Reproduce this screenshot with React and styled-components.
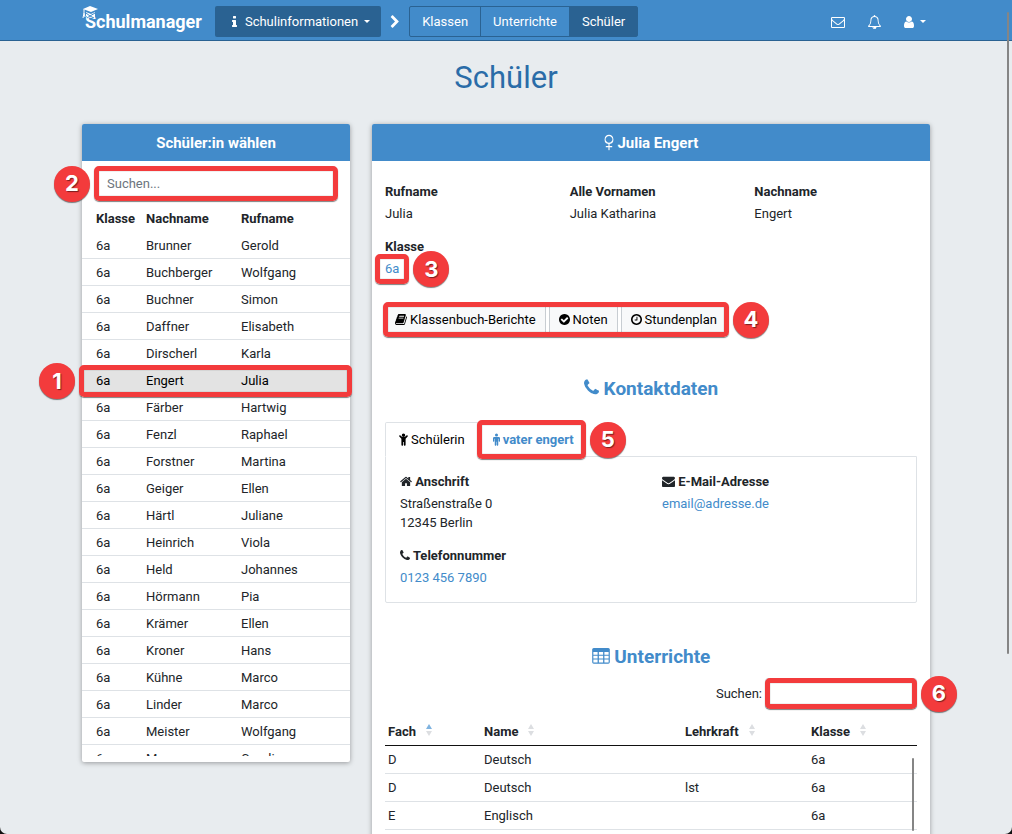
import React from 'react'
import styled, { createGlobalStyle } from "styled-components";

const Students = [
  { first: "Gerold", last: "Brunner" },
  { first: "Wolfgang", last: "Buchberger" },
  { first: "Simon", last: "Buchner" },
  { first: "Elisabeth", last: "Daffner" },
  { first: "Karla", last: "Dirscherl" },
  { first: "Julia", last: "Engert", active: true },
  { first: "Hartwig", last: "Färber" },
  { first: "Raphael", last: "Fenzl" },
  { first: "Martina", last: "Forstner" },
  { first: "Ellen", last: "Geiger" },
  { first: "Juliane", last: "Härtl" },
  { first: "Viola", last: "Heinrich" },
  { first: "Johannes", last: "Held" },
  { first: "Pia", last: "Hörmann" },
  { first: "Ellen", last: "Krämer" },
  { first: "Hans", last: "Kroner" },
  { first: "Marco", last: "Kühne" },
  { first: "Marco", last: "Linder" },
  { first: "Wolfgang", last: "Meister" },
  { first: "Caroline", last: "Manz" },
];

const Lessons = [
  { id: 0, subject: "D", name: "Deutsch", teacher: "", grade: "6a" },
  { id: 1, subject: "D", name: "Deutsch", teacher: "lst", grade: "6a" },
  { id: 2, subject: "E", name: "Englisch", teacher: "", grade: "6a" },
];

// [left edge, width, path], all on a 1792 unit high box
const Icons = {
  info: [576, 640, "M1216 1344v128q0 26-19 45t-45 19h-512q-26 0-45-19t-19-45v-128q0-26 19-45t45-19h64v-384h-64q-26 0-45-19t-19-45v-128q0-26 19-45t45-19h384q26 0 45 19t19 45v576h64q26 0 45 19t19 45zm-128-1152v192q0 26-19 45t-45 19h-256q-26 0-45-19t-19-45v-192q0-26 19-45t45-19h256q26 0 45 19t19 45z"],
  chevron: [256, 1280, "M1363 877l-742 742q-19 19-45 19t-45-19l-166-166q-19-19-19-45t19-45l531-531-531-531q-19-19-19-45t19-45l166-166q19-19 45-19t45 19l742 742q19 19 19 45t-19 45z"],
  mail: [0, 1792, "M1664 1504v-768q-32 36-69 66-268 206-426 338-51 43-83 67t-86.5 48.5-102.5 24.5h-2q-48 0-102.5-24.5t-86.5-48.5-83-67q-158-132-426-338-37-30-69-66v768q0 13 9.5 22.5t22.5 9.5h1472q13 0 22.5-9.5t9.5-22.5zm0-1051v-24.5l-.5-13-3-12.5-5.5-9-9-7.5-14-2.5h-1472q-13 0-22.5 9.5t-9.5 22.5q0 168 147 284 193 152 401 317 6 5 35 29.5t46 37.5 44.5 31.5 50.5 27.5 43 9h2q20 0 43-9t50.5-27.5 44.5-31.5 46-37.5 35-29.5q208-165 401-317 54-43 100.5-115.5t46.5-131.5zm128-37v1088q0 66-47 113t-113 47h-1472q-66 0-113-47t-47-113v-1088q0-66 47-113t113-47h1472q66 0 113 47t47 113z"],
  bell: [64, 1664, "M912 1696q0-16-16-16-59 0-101.5-42.5t-42.5-101.5q0-16-16-16t-16 16q0 73 51.5 124.5t124.5 51.5q16 0 16-16zm-666-288h1300q-266-300-266-832 0-51-24-105t-69-103-121.5-80.5-169.5-31.5-169.5 31.5-121.5 80.5-69 103-24 105q0 532-266 832zm1482 0q0 52-38 90t-90 38h-448q0 106-75 181t-181 75-181-75-75-181h-448q-52 0-90-38t-38-90q50-42 91-88t85-119.5 74.5-158.5 50-206 19.5-260q0-152 117-282.5t307-158.5q-8-19-8-39 0-40 28-68t68-28 68 28 28 68q0 20-8 39 190 28 307 158.5t117 282.5q0 139 19.5 260t50 206 74.5 158.5 85 119.5 91 88z"],
  user: [256, 1280, "M1536 1399q0 109-62.5 187t-150.5 78h-854q-88 0-150.5-78t-62.5-187q0-85 8.5-160.5t31.5-152 58.5-131 94-89 134.5-34.5q131 128 313 128t313-128q76 0 134.5 34.5t94 89 58.5 131 31.5 152 8.5 160.5zm-256-887q0 159-112.5 271.5t-271.5 112.5-271.5-112.5-112.5-271.5 112.5-271.5 271.5-112.5 271.5 112.5 112.5 271.5z"],
  book: [64, 1664, "M1703 478q40 57 18 129l-275 906q-19 64-76.5 107.5t-122.5 43.5h-923q-77 0-148.5-53.5t-99.5-131.5q-24-67-2-127 0-4 3-27t4-37q1-8-3-21.5t-3-19.5q2-11 8-21t16.5-23.5 16.5-23.5q23-38 45-91.5t30-91.5q3-10 .5-30t-.5-28q3-11 17-28t17-23q21-36 42-92t25-90q1-9-2.5-32t.5-28q4-13 22-30.5t22-22.5q19-26 42.5-84.5t27.5-96.5q1-8-3-25.5t-2-26.5q2-8 9-18t18-23 17-21q8-12 16.5-30.5t15-35 16-36 19.5-32 26.5-23.5 36-11.5 47.5 5.5l-1 3q38-9 51-9h761q74 0 114 56t18 130l-274 906q-36 119-71.5 153.5t-128.5 34.5h-869q-27 0-38 15-11 16-1 43 24 70 144 70h923q29 0 56-15.5t35-41.5l300-987q7-22 5-57 38 15 59 43zm-1064 2q-4 13 2 22.5t20 9.5h608q13 0 25.5-9.5t16.5-22.5l21-64q4-13-2-22.5t-20-9.5h-608q-13 0-25.5 9.5t-16.5 22.5zm-83 256q-4 13 2 22.5t20 9.5h608q13 0 25.5-9.5t16.5-22.5l21-64q4-13-2-22.5t-20-9.5h-608q-13 0-25.5 9.5t-16.5 22.5z"],
  check: [128, 1536, "M1412 734q0-28-18-46l-91-90q-19-19-45-19t-45 19l-408 407-226-226q-19-19-45-19t-45 19l-91 90q-18 18-18 46 0 27 18 45l362 362q19 19 45 19 27 0 46-19l543-543q18-18 18-45zm252 162q0 209-103 385.5t-279.5 279.5-385.5 103-385.5-103-279.5-279.5-103-385.5 103-385.5 279.5-279.5 385.5-103 385.5 103 279.5 279.5 103 385.5z"],
  clock: [128, 1536, "M1024 544v448q0 14-9 23t-23 9h-320q-14 0-23-9t-9-23v-64q0-14 9-23t23-9h224v-352q0-14 9-23t23-9h64q14 0 23 9t9 23zm416 352q0-148-73-273t-198-198-273-73-273 73-198 198-73 273 73 273 198 198 273 73 273-73 198-198 73-273zm224 0q0 209-103 385.5t-279.5 279.5-385.5 103-385.5-103-279.5-279.5-103-385.5 103-385.5 279.5-279.5 385.5-103 385.5 103 279.5 279.5 103 385.5z"],
  phone: [192, 1408, "M1600 1240q0 27-10 70.5t-21 68.5q-21 50-122 106-94 51-186 51-27 0-53-3.5t-57.5-12.5-47-14.5-55.5-20.5-49-18q-98-35-175-83-127-79-264-216t-216-264q-48-77-83-175-3-9-18-49t-20.5-55.5-14.5-47-12.5-57.5-3.5-53q0-92 51-186 56-101 106-122 25-11 68.5-21t70.5-10q14 0 21 3 18 6 53 76 11 19 30 54t35 63.5 31 53.5q3 4 17.5 25t21.5 35.5 7 28.5q0 20-28.5 50t-62 55-62 53-28.5 46q0 9 5 22.5t8.5 20.5 14 24 11.5 19q76 137 174 235t235 174q2 1 19 11.5t24 14 20.5 8.5 22.5 5q18 0 46-28.5t53-62 55-62 50-28.5q14 0 28.5 7t35.5 21.5 25 17.5q25 15 53.5 31t63.5 35 54 30q70 35 76 53 3 7 3 21z"],
  home: [64, 1664, "M1472 992v480q0 26-19 45t-45 19h-384v-384h-256v384h-384q-26 0-45-19t-19-45v-480q0-1 .5-3t.5-3l575-474 575 474q1 2 1 6zm223-69l-62 74q-8 9-21 11h-3q-13 0-21-7l-692-577-692 577q-12 8-24 7-13-2-21-11l-62-74q-8-10-7-23.5t11-21.5l719-599q32-26 76-26t76 26l244 204v-195q0-14 9-23t23-9h192q14 0 23 9t9 23v408l219 182q10 8 11 21.5t-7 23.5z"],
  envelope: [0, 1792, "M1792 710v794q0 66-47 113t-113 47h-1472q-66 0-113-47t-47-113v-794q44 49 101 87 362 246 497 345 57 42 92.5 65.5t94.5 48 110 24.5h2q51 0 110-24.5t94.5-48 92.5-65.5q170-123 498-345 57-39 100-87zm0-294q0 79-49 151t-122 123q-376 261-468 325-10 7-42.5 31t-54 38.5-52 32.5-57.5 27-50 9h-2q-23 0-50-9t-57.5-27-52-32.5-54-38.5-42.5-31q-91-64-262-182.5t-205-142.5q-62-42-117-115.5t-55-136.5q0-78 41.5-130t118.5-52h1472q65 0 112.5 47t47.5 113z"],
  child: [288, 1216, "M1136 300a240 240 0 1 1-480 0a240 240 0 1 1 480 0zM1468 330q34 34 34 80t-34 80l-282 292v850q0 52-36 88t-84 36-84-36-36-88v-384h-100v384q0 52-36 88t-84 36-84-36-36-88v-850l-282-292q-34-34-34-80t34-80 78-34 78 34l236 238h348l236-238q32-34 78-34t78 34z"],
  male: [384, 1024, "M1116 230a220 220 0 1 1-440 0a220 220 0 1 1 440 0zM1408 704v416q0 40-28 68t-68 28-68-28-28-68v-352h-64v912q0 46-33 79t-79 33-79-33-33-79v-464h-64v464q0 46-33 79t-79 33-79-33-33-79v-912h-64v352q0 40-28 68t-68 28-68-28-28-68v-416q0-80 56-136t136-56h640q80 0 136 56t56 136z"],
  table: [64, 1664, "M208 192h1376q60 0 102 42t42 102v1184q0 60-42 102t-102 42h-1376q-60 0-102-42t-42-102v-1184q0-60 42-102t102-42zM176 560h400v260h-400zM696 560h400v260h-400zM1216 560h400v260h-400zM176 920h400v260h-400zM696 920h400v260h-400zM1216 920h400v260h-400zM176 1280h400v270h-400zM696 1280h400v270h-400zM1216 1280h400v270h-400z"],
  venus: [352, 1088, "M896 64a500 500 0 0 1 64 992v224h256q32 0 32 32v64q0 32-32 32h-256v288q0 32-32 32h-64q-32 0-32-32v-288h-256q-32 0-32-32v-64q0-32 32-32h256v-224a500 500 0 0 1 64-992zM896 190a370 370 0 1 0 1 0z"],
};

function Icon({ name, size = 13 }) {
  const [left, width, path] = Icons[name];
  return (
    <Glyph
      viewBox={`${left} 0 ${width} 1792`}
      width={Math.round((size * width) / 1792)}
      height={size}
      aria-hidden="true"
    >
      <path fillRule="evenodd" d={path} />
    </Glyph>
  )
}

function Callout({ number, side = "right", inset = "0" }) {
  return (
    <Ring $inset={inset}>
      <Badge $side={side}>{number}</Badge>
    </Ring>
  )
}

function SortHeader({ label, sorted }) {
  return (
    <th>
      {label}
      <Sort viewBox="0 0 6 12" width="6" height="12" aria-hidden="true">
        <path d="M0 5L3 0L6 5z" fill={sorted ? "#7fb3e0" : "#dcdee1"} />
        <path d="M0 7L3 12L6 7z" fill="#dcdee1" />
      </Sort>
    </th>
  )
}

function Navbar() {
  return (
    <NavBar>
      <NavInner>
        <Brand href="#">
          <Cap viewBox="0 0 16 13" width="16" height="13" aria-hidden="true">
            <path d="M1 3L8 0L16 3L9 6z" fill="#fff" />
            <path d="M2 3v4l-1 5M2 7l1 4" stroke="#fff" fill="none" />
            <path d="M4 6l5 2l4-2v5l-4 1l-5-2z" fill="#fff" />
            <path d="M4 7l4 3l5-3M5 12l3-2l4 2" stroke="#428bca" fill="none" />
          </Cap>
          Schulmanager
        </Brand>
        <ModuleButton type="button">
          <Icon name="info" size={14} />
          Schulinformationen
          <Caret />
        </ModuleButton>
        <Icon name="chevron" size={14} />
        <PageLinks>
          <PageLink href="#">Klassen</PageLink>
          <PageLink href="#">Unterrichte</PageLink>
          <PageLink href="#" $active>Schüler</PageLink>
        </PageLinks>
        <NavActions>
          <IconButton type="button" aria-label="Nachrichten"><Icon name="mail" size={14} /></IconButton>
          <IconButton type="button" aria-label="Benachrichtigungen"><Icon name="bell" size={14} /></IconButton>
          <IconButton type="button" aria-label="Konto"><Icon name="user" size={14} /><Caret /></IconButton>
        </NavActions>
      </NavInner>
    </NavBar>
  )
}

function StudentList() {
  return (
    <Card $span={4}>
      <CardHeader>Schüler:in wählen</CardHeader>
      <SearchBox>
        <TextInput type="text" placeholder="Suchen..." aria-label="Suchen" />
        <Callout number={2} side="left" inset="-2px -3px" />
      </SearchBox>
      <ListClip>
        <StudentTable>
          <colgroup>
            <col className="grade" />
            <col className="last" />
            <col />
          </colgroup>
          <thead>
            <tr><th>Klasse</th><th>Nachname</th><th>Rufname</th></tr>
          </thead>
          <tbody>
            {Students.map((student) => (
              <StudentRow key={student.last} $active={student.active}>
                <td>6a</td>
                <td>{student.last}</td>
                <td>
                  {student.first}
                  {student.active && <Callout number={1} side="left" inset="-2px -2px -3px -3px" />}
                </td>
              </StudentRow>
            ))}
          </tbody>
        </StudentTable>
      </ListClip>
    </Card>
  )
}

function ContactData() {
  return (
    <section>
      <SectionTitle><Icon name="phone" size={19} /> Kontaktdaten</SectionTitle>
      <Tabs role="tablist">
        <Tab type="button" role="tab" aria-selected="true" $active><Icon name="child" />Schülerin</Tab>
        <Tab type="button" role="tab" aria-selected="false">
          <Icon name="male" />vater engert
          <Callout number={5} inset="-3px 1px -3px -3px" />
        </Tab>
      </Tabs>
      <TabPanel role="tabpanel">
        <Fields>
          <Field>
            <dt><Icon name="home" /> Anschrift</dt>
            <dd>Straßenstraße 0<br />12345 Berlin</dd>
          </Field>
          <Field>
            <dt><Icon name="phone" /> Telefonnummer</dt>
            <dd><a href="#">0123 456 7890</a></dd>
          </Field>
        </Fields>
        <Fields>
          <Field>
            <dt><Icon name="envelope" /> E-Mail-Adresse</dt>
            <dd><a href="#">email@adresse.de</a></dd>
          </Field>
        </Fields>
      </TabPanel>
    </section>
  )
}

function LessonList() {
  return (
    <section>
      <SectionTitle><Icon name="table" size={19} /> Unterrichte</SectionTitle>
      <FilterRow>
        <label htmlFor="lesson-search">Suchen:</label>
        <FilterBox>
          <TextInput id="lesson-search" type="search" />
          <Callout number={6} />
        </FilterBox>
      </FilterRow>
      <LessonArea>
        <LessonTable>
          <colgroup>
            <col className="subject" />
            <col className="name" />
            <col className="teacher" />
            <col />
          </colgroup>
          <thead>
            <tr>
              <SortHeader label="Fach" sorted />
              <SortHeader label="Name" />
              <SortHeader label="Lehrkraft" />
              <SortHeader label="Klasse" />
            </tr>
          </thead>
          <tbody>
            {Lessons.map((lesson) => (
              <tr key={lesson.id}>
                <td>{lesson.subject}</td>
                <td>{lesson.name}</td>
                <td>{lesson.teacher}</td>
                <td>{lesson.grade}</td>
              </tr>
            ))}
          </tbody>
        </LessonTable>
        <TableThumb />
      </LessonArea>
    </section>
  )
}

function StudentDetails() {
  return (
    <Card $span={8} $tall>
      <CardHeader><Icon name="venus" size={17} /> Julia Engert</CardHeader>
      <CardBody>
        <NameGrid>
          <Field><dt>Rufname</dt><dd>Julia</dd></Field>
          <Field><dt>Alle Vornamen</dt><dd>Julia Katharina</dd></Field>
          <Field><dt>Nachname</dt><dd>Engert</dd></Field>
          <Field>
            <dt>Klasse</dt>
            <dd>
              <Marked>
                <a href="#">6a</a>
                <Callout number={3} inset="-5px -10px -6px" />
              </Marked>
            </dd>
          </Field>
        </NameGrid>
        <Actions>
          <ActionButton type="button"><Icon name="book" />Klassenbuch-Berichte</ActionButton>
          <ActionButton type="button"><Icon name="check" />Noten</ActionButton>
          <ActionButton type="button"><Icon name="clock" />Stundenplan</ActionButton>
          <Callout number={4} inset="-2px" />
        </Actions>
        <ContactData />
        <LessonList />
      </CardBody>
    </Card>
  )
}

export default function App() {
  return (
    <Page>
      <GlobalStyle />
      <Navbar />
      <Content>
        <h1>Schüler</h1>
        <Columns>
          <StudentList />
          <StudentDetails />
        </Columns>
      </Content>
      <PageThumb />
    </Page>
  )
}

const GlobalStyle = createGlobalStyle`
  * {
    box-sizing: border-box;
  }

  body {
    margin: 0;
    background: #111;
    color: #212529;
    font-family: Roboto, "Liberation Sans", sans-serif;
    font-size: 13px;
    line-height: 19px;
  }

  button, input {
    font: inherit;
  }

  a {
    color: #428bca;
    text-decoration: none;
  }

  table {
    width: 100%;
    table-layout: fixed;
    border-collapse: separate;
    border-spacing: 0;
  }

  th {
    font-weight: 700;
    text-align: left;
    white-space: nowrap;
  }
`;

const Page = styled.div`
  position: relative;
  display: flex;
  flex-direction: column;
  height: 100vh;
  overflow: hidden;
  background: #e8ecef;
  border-radius: 0 0 7px 7px;
`;

const Glyph = styled.svg`
  flex: none;
  fill: currentColor;
  vertical-align: -2px;
`;

const Ring = styled.span`
  position: absolute;
  inset: ${(p) => p.$inset};
  border: 5px solid #f33b3c;
  border-radius: 5px;
  box-shadow: 0 1px 1px rgba(0, 0, 0, 0.5), inset 0 0 1px rgba(0, 0, 0, 0.6);
  pointer-events: none;
`;

const Badge = styled.span`
  position: absolute;
  top: 50%;
  ${(p) => (p.$side === "left" ? "right" : "left")}: calc(100% + 9px);
  display: flex;
  align-items: center;
  justify-content: center;
  width: 36px;
  height: 36px;
  margin-top: -18px;
  border-radius: 50%;
  background: #f33b3c;
  color: #fff;
  font-family: Inter, "Liberation Sans", sans-serif;
  font-size: 22px;
  font-weight: 700;
  box-shadow: 0 1px 1px rgba(0, 0, 0, 0.5);
  text-shadow: 1px 1px 1px rgba(0, 0, 0, 0.5);
`;

const NavBar = styled.nav`
  flex: none;
  background: #428bca;
  border-bottom: 1px solid #2a6292;
  color: #fff;
`;

const NavInner = styled.div`
  display: flex;
  align-items: center;
  gap: 9px;
  max-width: 848px;
  height: 40px;
  margin: 0 auto;
  padding-top: 3px;
`;

const Brand = styled.a`
  position: relative;
  margin-right: 4px;
  padding-left: 3px;
  color: #fff;
  font-size: 18px;
  font-weight: 700;
`;

const Cap = styled.svg`
  position: absolute;
  top: -6px;
  left: 0;
`;

const ModuleButton = styled.button`
  display: flex;
  align-items: center;
  height: 31px;
  padding: 0 11px 0 17px;
  border: 0;
  border-radius: 2px;
  background: #2a6292;
  color: #fff;

  svg {
    margin-right: 8px;
  }
`;

const Caret = styled.span`
  margin-left: 6px;
  border: 3px solid transparent;
  border-top-color: currentColor;
  border-bottom: 0;
`;

const PageLinks = styled.div`
  display: flex;
  border: 1px solid #2a6292;
  border-radius: 2px;
`;

const PageLink = styled.a`
  padding: 5px 12px;
  background: ${(p) => (p.$active ? "#2a6292" : "transparent")};
  color: #fff;

  & + & {
    border-left: 1px solid #2a6292;
  }
`;

const NavActions = styled.div`
  display: flex;
  gap: 23px;
  margin-left: auto;
  padding-right: 4px;
`;

const IconButton = styled.button`
  display: flex;
  align-items: center;
  padding: 0;
  border: 0;
  background: none;
  color: #fff;
`;

const Content = styled.main`
  flex: 1;
  display: flex;
  flex-direction: column;
  width: 100%;
  max-width: 848px;
  min-height: 0;
  margin: 0 auto;

  h1 {
    margin: 17px 0 26px;
    color: #2a6ca8;
    font-size: 31px;
    font-weight: 400;
    line-height: 40px;
    text-align: center;
  }
`;

const Columns = styled.div`
  display: grid;
  grid-template-columns: repeat(12, 1fr);
  column-gap: 22px;
  align-items: start;
`;

const Card = styled.section`
  grid-column: span ${(p) => p.$span};
  min-height: ${(p) => (p.$tall ? "100vh" : "0")};
  padding-bottom: 6px;
  border-radius: 2px;
  background: #fff;
  box-shadow: 0 1px 5px rgba(0, 0, 0, 0.35);
`;

const CardHeader = styled.h2`
  margin: 0;
  padding: 10px 9px 8px;
  border-radius: 2px 2px 0 0;
  background: #428bca;
  color: #fff;
  font-size: 15px;
  font-weight: 700;
  text-align: center;

  svg {
    vertical-align: -3px;
  }
`;

const CardBody = styled.div`
  padding: 21px 13px 0;
`;

const SearchBox = styled.div`
  position: relative;
  height: 31px;
  margin: 7px 15px 6px;
`;

const TextInput = styled.input`
  display: block;
  width: 100%;
  height: 100%;
  padding: 0 9px;
  border: 1px solid #ced4da;
  border-radius: 3px;
  background: #fff;
  color: #212529;

  &::placeholder {
    color: #6c757d;
  }
`;

const ListClip = styled.div`
  height: 551px;
  overflow-x: visible;
  overflow-y: clip;
`;

const StudentTable = styled.table`
  .grade {
    width: 50px;
  }

  .last {
    width: 95px;
  }

  th, td {
    height: 27px;
    padding: 0 0 0 14px;
  }

  td {
    border-bottom: 1px solid #dee2e6;
  }
`;

const StudentRow = styled.tr`
  position: relative;
  background: ${(p) => (p.$active ? "#e3e3e3" : "transparent")};
  color: ${(p) => (p.$active ? "#000" : "inherit")};
`;

const NameGrid = styled.dl`
  display: grid;
  grid-template-columns: repeat(3, 1fr);
  gap: 14px 22px;
  margin: 0;
`;

const Fields = styled.dl`
  display: flex;
  flex-direction: column;
  gap: 14px;
  margin: 0;
`;

const Field = styled.div`
  dt {
    margin-bottom: 3px;
    font-weight: 700;
  }

  dd {
    margin: 0;
  }
`;

const Marked = styled.span`
  position: relative;
  display: inline-block;
`;

const Actions = styled.div`
  position: relative;
  display: flex;
  gap: 3px;
  width: fit-content;
  margin-top: 26px;
`;

const ActionButton = styled.button`
  display: flex;
  align-items: center;
  gap: 3px;
  height: 31px;
  padding: 0 9px;
  border: 1px solid #c8cdd2;
  border-radius: 2px;
  background: #f8f9fa;
  color: #000;
`;

const SectionTitle = styled.h3`
  margin: 42px 0 21px;
  color: #428bca;
  font-size: 19px;
  font-weight: 700;
  line-height: 24px;
  text-align: center;
`;

const Tabs = styled.div`
  display: flex;
`;

const Tab = styled.button`
  position: relative;
  display: flex;
  align-items: center;
  gap: 3px;
  height: 35px;
  margin-bottom: -1px;
  padding: 0 13px;
  border: 1px solid ${(p) => (p.$active ? "#dee2e6" : "transparent")};
  border-bottom-color: ${(p) => (p.$active ? "#fff" : "transparent")};
  border-radius: 2px 2px 0 0;
  background: ${(p) => (p.$active ? "#fff" : "transparent")};
  color: ${(p) => (p.$active ? "#000" : "#428bca")};
  font-weight: ${(p) => (p.$active ? 400 : 700)};
  z-index: 1;
`;

const TabPanel = styled.div`
  display: grid;
  grid-template-columns: 1fr 1fr;
  gap: 22px;
  padding: 15px 14px;
  border: 1px solid #dee2e6;
  border-radius: 0 0 2px 2px;
`;

const FilterRow = styled.div`
  display: flex;
  align-items: center;
  justify-content: flex-end;
  gap: 3px;
  margin-top: -12px;
`;

const FilterBox = styled.div`
  position: relative;
  width: 152px;
  height: 31px;
`;

const LessonArea = styled.div`
  position: relative;
  margin-top: 9px;
`;

const LessonTable = styled.table`
  .subject {
    width: 96px;
  }

  .name {
    width: 201px;
  }

  .teacher {
    width: 126px;
  }

  th, td {
    height: 28px;
    padding: 0 3px;
    border-bottom: 1px solid #dee2e6;
  }

  th {
    border-bottom-color: #111;
  }
`;

const Sort = styled.svg`
  margin-left: 10px;
`;

const Thumb = styled.div`
  position: absolute;
  width: 2px;
  border-radius: 1px;
  background: #858585;
`;

const TableThumb = styled(Thumb)`
  top: 40px;
  right: 3px;
  height: 73px;
`;

const PageThumb = styled(Thumb)`
  top: 12px;
  right: 3px;
  height: 77vh;
`;
